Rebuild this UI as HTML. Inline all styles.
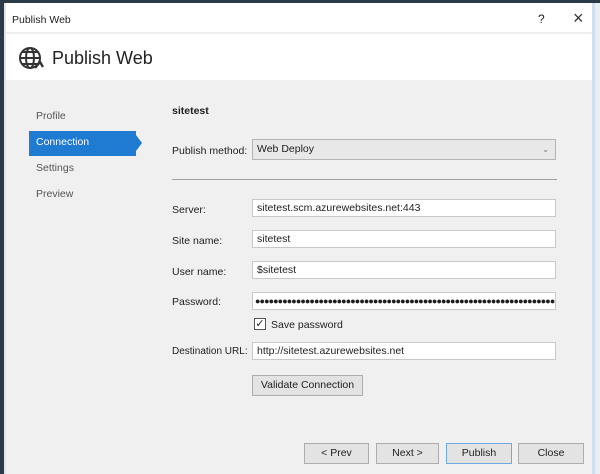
<!DOCTYPE html>
<html><head><style>
*{margin:0;padding:0;box-sizing:border-box}
body{width:600px;height:474px;overflow:hidden;background:#e9eef3;font-family:"Liberation Sans",sans-serif;font-size:10.5px;color:#1e1e1e;position:relative}
#top{position:absolute;left:0;top:0;width:600px;height:3px;background:#2b3a44}
#lft{position:absolute;left:0;top:0;width:4px;height:474px;background:#2b3a44}
#win{position:absolute;left:4px;top:3px;width:591px;height:471px;background:#f0f0f0;border-left:2px solid #dbe6f0;border-right:3px solid #cfdff0}
.a{position:absolute;white-space:nowrap}
.inp{position:absolute;left:246px;width:304px;height:18px;background:#fff;border:1px solid #c8c8c8;padding:0 4px;line-height:16px;font-size:10.5px}
.btn{position:absolute;height:21px;background:#e3e3e3;border:1px solid #adadad;text-align:center;line-height:19px;font-size:10.5px}
</style></head><body>
<div id="top"></div><div id="lft"></div>
<div id="win">
<div class="a" style="left:0;top:0;width:586px;height:30px;background:#fff;border-bottom:1px solid #eee"></div>
<div class="a" style="left:6px;top:11px;font-size:10.5px">Publish Web</div>
<div class="a" style="left:532px;top:9px;font-size:12px">?</div>
<div class="a" style="left:567px;top:5px;font-size:18px;color:#333">×</div>
<div class="a" style="left:0;top:31px;width:586px;height:46px;background:#fff"></div>
<svg class="a" style="left:12px;top:43px" width="26" height="26" viewBox="0 0 26 26" fill="none" stroke="#333" stroke-width="2">
<circle cx="12" cy="12" r="10"/><ellipse cx="12" cy="12" rx="4" ry="10"/><line x1="2" y1="12" x2="22" y2="12"/><line x1="4" y1="6" x2="20" y2="6"/><line x1="4" y1="18" x2="20" y2="18"/>
<path d="M17 22 L22 16 L25 21" stroke-width="2.4" fill="#fff"/></svg>
<div class="a" style="left:46px;top:45px;font-size:18px;color:#222">Publish Web</div>
<div class="a" style="left:30px;top:107px;color:#555">Profile</div>
<div class="a" style="left:23px;top:128px;width:107px;height:25px;background:#1f7ad1"></div>
<div class="a" style="left:130px;top:132px;width:0;height:0;border-top:8px solid transparent;border-bottom:8px solid transparent;border-left:6px solid #1f7ad1"></div>
<div class="a" style="left:30px;top:133px;color:#fff">Connection</div>
<div class="a" style="left:30px;top:159px;color:#555">Settings</div>
<div class="a" style="left:30px;top:185px;color:#555">Preview</div>
<div class="a" style="left:166px;top:102px;font-weight:bold;font-size:10.5px">sitetest</div>
<div class="a" style="left:166px;top:142px">Publish method:</div>
<div class="inp" style="top:136px;height:21px;line-height:19px;background:#e8e8e8;border-color:#b5b5b5">Web Deploy<span style="position:absolute;right:6px;top:0;font-size:8px;color:#777">⌄</span></div>
<div class="a" style="left:166px;top:176px;width:385px;height:1px;background:#a0a0a0"></div>
<div class="a" style="left:166px;top:201px">Server:</div>
<div class="inp" style="top:196px">sitetest.scm.azurewebsites.net:443</div>
<div class="a" style="left:166px;top:232px">Site name:</div>
<div class="inp" style="top:227px">sitetest</div>
<div class="a" style="left:166px;top:263px">User name:</div>
<div class="inp" style="top:258px">$sitetest</div>
<div class="a" style="left:166px;top:293px">Password:</div>
<div class="inp" style="top:289px;font-size:9px;letter-spacing:-0.9px;line-height:16px;overflow:hidden;padding-left:2px">●●●●●●●●●●●●●●●●●●●●●●●●●●●●●●●●●●●●●●●●●●●●●●●●●●●●●●●●●●●●●●●●●●●●●●</div>
<div class="a" style="left:248px;top:315px;width:12px;height:12px;border:1px solid #555;background:#fff;font-size:11px;line-height:10px;text-align:center">✓</div>
<div class="a" style="left:265px;top:316px">Save password</div>
<div class="a" style="left:166px;top:343px;font-size:10px">Destination URL:</div>
<div class="inp" style="top:339px">http://sitetest.azurewebsites.net</div>
<div class="btn" style="left:246px;top:372px;width:111px">Validate Connection</div>
<div class="btn" style="left:298px;top:440px;width:65px">&lt; Prev</div>
<div class="btn" style="left:370px;top:440px;width:63px">Next &gt;</div>
<div class="btn" style="left:440px;top:440px;width:66px;border-color:#6ea9e0">Publish</div>
<div class="btn" style="left:512px;top:440px;width:66px">Close</div>
</div>
</body></html>
